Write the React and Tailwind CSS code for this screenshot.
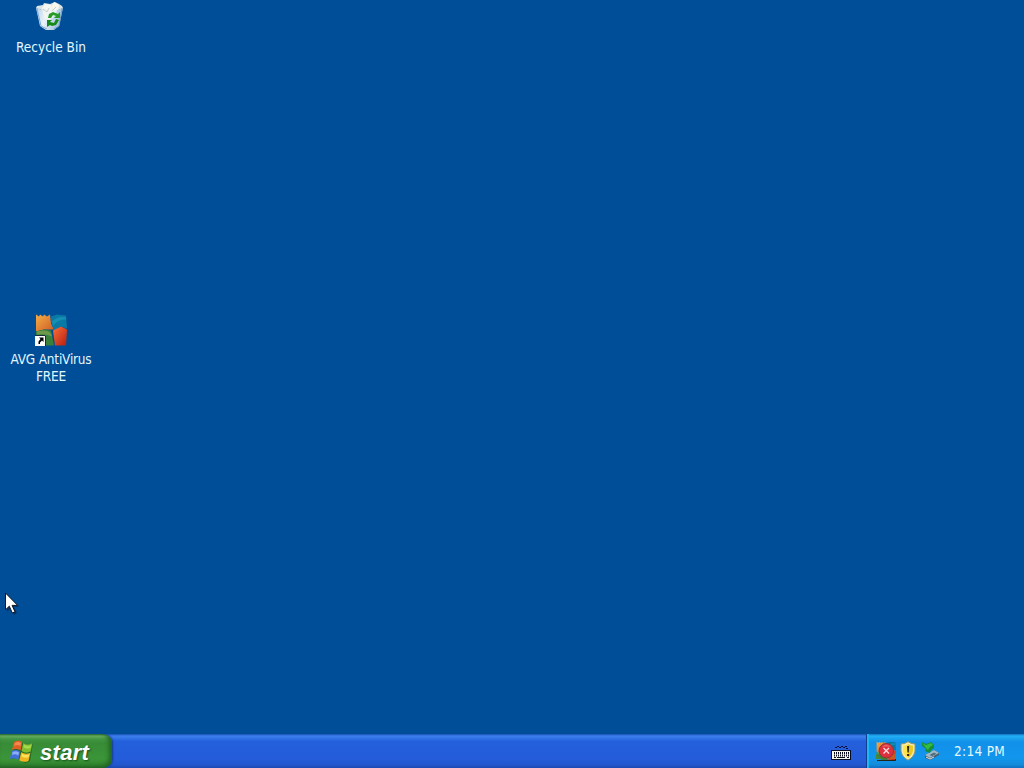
import React from "react";

function RecycleBin() {
  return (
    <svg className="block h-8 w-8" viewBox="0 0 32 32">
      <defs>
        <linearGradient id="bin" x1="0" x2="1" y1="0" y2="0.3">
          <stop offset="0" stopColor="#b9d3ea" />
          <stop offset="0.45" stopColor="#e9f3f8" />
          <stop offset="1" stopColor="#9dbddb" />
        </linearGradient>
      </defs>
      <path d="M2 8 L3 6 L9 5 L10 3 L16 4 L21 2 L25 4 L28 6 L29 8 L16 13 Z" fill="#dce4e6" />
      <path d="M9 8 L11 4 L17 5 L15 11 Z" fill="#fffdf0" />
      <path d="M16 9 L20 2 L25 5 L24 12 Z" fill="#faf8ea" />
      <path d="M2 8 L11 11 L20 11 L29 8 L25 26 L20 30 L12 30 L6 26 Z" fill="url(#bin)" />
      <path d="M8 8 L11 4 L17 6 L23 7 L22 15 L15 20 L10 18 Z" fill="#f4f6f0" opacity=".85" />
      <path d="M3 9 L7 26 L13 29" stroke="#82a9d1" fill="none" />
      <path d="M28 9 L25 26 L20 29" stroke="#779fc7" fill="none" />
      <path d="M9 9 L13 12 L15 8 M18 11 L22 7" stroke="#c6d0d1" fill="none" />
      <path d="M15 14 L19 12 L24 14 L26 12 V18 H20 L22 16 L19 15 L17 18 H14 Z" fill="#269b26" />
      <path d="M13 20 H18 L16 22 L20 23 L22 19 L25 20 L22 25 L18 26 L16 25 L13 27 Z" fill="#168a18" />
    </svg>
  );
}

function AvgMark({ className }) {
  return (
    <svg className={className} viewBox="0 0 32 32">
      <defs>
        <linearGradient id="orange" x2="1" y2="1">
          <stop stopColor="#f5ad45" />
          <stop offset="1" stopColor="#cc5b25" />
        </linearGradient>
        <linearGradient id="red" x2="1" y2="1">
          <stop stopColor="#fb7138" />
          <stop offset="1" stopColor="#b91d10" />
        </linearGradient>
      </defs>
      <path d="M1 1 L4 3 L5 1 L8 3 L9 1 L12 3 L15 1 L16 10 L19 16 L9 16 L1 18 Z" fill="url(#orange)" />
      <path d="M16 3 L22 1 L31 2 L32 15 L26 13 L19 17 L16 9 Z" fill="#087aa5" />
      <path d="M17 8 Q23 2 31 4 L31 6 Q24 5 18 12 Z" fill="#168fb5" />
      <path d="M1 18 L9 16 L16 17 L19 32 L10 32 L1 22 Z" fill="#39813a" />
      <path d="M2 18 Q12 15 16 20 L17 23 Q10 20 2 21 Z" fill="#6d994b" />
      <path d="M18 17 L26 13 L32 16 L31 32 L20 32 Z" fill="url(#red)" />
    </svg>
  );
}

function AvgIcon() {
  return (
    <div className="relative h-[33px] w-[32px]">
      <AvgMark className="block h-[33px] w-[32px]" />
      <svg className="absolute bottom-0 left-0 h-[11px] w-[11px]" viewBox="0 0 11 11">
        <path d="M0 0H11V11H0Z" fill="#fff" />
        <path d="M0 .5H10.5V11" fill="none" stroke="#182c3f" />
        <path d="M4 2.5 H8.5 V7 L7 5.5 L5 7.5 V9 H3.5 V6.5 L5.5 4 Z" fill="#000" />
      </svg>
    </div>
  );
}

function WindowsFlag() {
  return (
    <svg className="block h-[26px] w-[26px] shrink-0" viewBox="0 0 26 26">
      <path d="M6 5 Q10 2 14 5 Q19 8 24 5 L21 23 Q16 27 11 22 Q6 19 2 21 Z" fill="#1e5a24" opacity=".75" />
      <path d="M5 4 Q9 1 13.3 4 L11.5 12.5 Q7 10 3 12 Z" fill="#df6023" />
      <path d="M6 5 Q9 3 12 5 L11.3 8 Q8 6 5 8 Z" fill="#f58a4e" />
      <path d="M14.2 5 Q18.5 8 23.5 5 L21.7 13.5 Q17 16 12.5 13 Z" fill="#80bb30" />
      <path d="M15 6.5 Q19 9 22.3 6.8 L21.6 10 Q18 11.5 14.4 9.5 Z" fill="#a7d948" />
      <path d="M2.7 13 Q7 11 11.2 13.5 L9.3 22 Q5 19 .8 21 Z" fill="#426fda" />
      <path d="M3.5 14 Q7 12.5 10 14.5 L9.3 17.5 Q6 15.5 3 17 Z" fill="#8baef8" />
      <path d="M12.2 14.3 Q17 17 21.4 14.7 L19.5 23 Q14.5 25 10.3 22.3 Z" fill="#efb61f" />
      <path d="M13 15.8 Q17 18 20.3 16.3 L19.6 19.3 Q16 20.5 12.4 18.6 Z" fill="#ffe259" />
    </svg>
  );
}

function Cursor() {
  return (
    <svg className="absolute left-[4px] top-[592px] h-[25px] w-[18px]" viewBox="0 0 18 25">
      <path d="M3 3 V20 L7 16 L10 23 L13 21 L10 15 H15 Z" fill="#002347" opacity=".55" />
      <path d="M1.5 1 V17.8 L5.3 14.2 L8.3 21 L11 19.8 L8.1 13.4 H13.7 Z" fill="#fff" stroke="#09121f" strokeWidth="1" />
    </svg>
  );
}

function Keyboard() {
  return (
    <svg className="block h-[18px] w-[20px]" viewBox="0 0 20 18">
      <path d="M4 4.5H6 M6 3.5H8 M8 4.5H10 M10 3.5H12 M12 4.5H14 M14 3.5H16 M15 5.5H17" stroke="#07123b" />
      <rect x="0" y="7" width="20" height="10" fill="#050b20" />
      <rect x="1" y="8" width="18" height="8" fill="#f5f5ed" />
      <path d="M3 10H18 M3 12.5H18" stroke="#080c1c" strokeWidth="1.8" strokeDasharray="1 1" />
      <path d="M3 14.5H5 M6 14.5H14 M16 14.5H18" stroke="#080c1c" />
    </svg>
  );
}

function TrayAvg() {
  return (
    <div className="relative h-[20px] w-[20px]">
      <AvgMark className="block h-[20px] w-[20px]" />
      <svg className="absolute inset-0 h-[20px] w-[20px]" viewBox="0 0 20 20">
        <path d="M1 19.5H19.5V15" fill="none" stroke="#222719" />
        <path d="M0 18V13L6 18Z" fill="#46873a" />
        <path d="M13 18L20 12V18Z" fill="#c65c22" />
        <circle cx="10.3" cy="9.7" r="7.2" fill="#dc303f" stroke="#94342e" />
        <path d="M6 6Q10 1 15 6Q10 5 6 6" fill="#eb6065" />
        <path d="M7.5 7 L13 12.5 M13 7 L7.5 12.5" stroke="#ffd9d9" strokeWidth="1.4" />
      </svg>
    </div>
  );
}

function Shield() {
  return (
    <svg className="block h-[20px] w-[16px]" viewBox="0 0 16 20">
      <path d="M8 .7 Q11 3 15 3 V10 Q14 16 8 19.2 Q2 16 1 10 V3 Q5 3 8 .7Z" fill="#f6eab0" stroke="#8d986b" />
      <path d="M8 3 Q10 4.5 13 4.7 V10 Q12 14.5 8 17Z" fill="#edc820" />
      <path d="M8 3 Q6 4.5 3 4.7 V10 Q4 14.5 8 17Z" fill="#ffe34b" />
      <path d="M7 5H9.2L8.8 11.5H7.4Z M7 13H9.2V15H7Z" fill="#322d14" />
    </svg>
  );
}

function RemoveDevice() {
  return (
    <svg className="block h-[20px] w-[18px]" viewBox="0 0 18 20">
      <path d="M3 14 L12 9 L17 12 V14 L8 19 L3 17Z" fill="#465e70" />
      <path d="M3 14 L12 9 L17 12 L8 17Z" fill="#9eb9c7" />
      <path d="M7.5 14 L12 11.5 L14.5 12.7 L10 15.3Z" fill="#526d7b" />
      <path d="M4 16 L8 18 L12 16" stroke="#dae1d8" fill="none" />
      <path d="M0 1 L4 3 L9 1 L12 4 L12 7 L9 9 L8 12 L3 10 L4 8 L0 5Z" fill="#178d36" />
      <path d="M0 2 L4 4 L9 2 L11 4 L8 6 L6 9 L4 7Z" fill="#35ba42" />
    </svg>
  );
}

export default function App() {
  return (
    <div className="relative flex h-screen w-full cursor-default select-none flex-col overflow-hidden bg-[#004e98] font-['DejaVu_Sans_Condensed','DejaVu_Sans',sans-serif] text-[#e2f8ff]">
      <main className="flex min-h-0 flex-1 flex-col items-start">
        <div className="flex h-[313px] w-[102px] flex-col items-center">
          <div className="pr-[2px]"><RecycleBin /></div>
          <span className="mt-[7px] whitespace-nowrap text-[13.5px] leading-[17px]">Recycle Bin</span>
        </div>
        <div className="flex w-[102px] flex-col items-center">
          <AvgIcon />
          <span className="mt-[5px] whitespace-nowrap text-center text-[13.5px] leading-[17px] tracking-[-0.2px]">
            AVG AntiVirus<br />FREE
          </span>
        </div>
      </main>
      <Cursor />
      <footer className="flex h-[34px] shrink-0 bg-[linear-gradient(to_bottom,#174fb4_0px,#3b80ed_2px,#3475e8_4px,#2460dc_7px,#245cda_25px,#2156cc_31px,#1c48b0_34px)]">
        <button className="flex h-full w-[112px] items-center rounded-r-[9px] bg-[linear-gradient(to_bottom,#246b34_0px,#6bb062_2px,#429641_5px,#388b37_9px,#3b9538_25px,#31842e_31px,#256a27_34px)] pl-[9px] shadow-[inset_-3px_-1px_4px_#216424,1px_0_2px_#173f8c]">
          <WindowsFlag />
          <span className="ml-[5px] pt-[3px] font-['Liberation_Sans',Arial,sans-serif] text-[22px] font-bold italic leading-none tracking-[0.3px] text-white [text-shadow:1px_1px_2px_#174d1d]">start</span>
        </button>
        <div className="flex flex-1 items-center justify-end pr-[15px] pt-[2px]"><Keyboard /></div>
        <div className="flex h-full w-[158px] items-center border-l border-[#103e91] bg-[linear-gradient(to_bottom,#1269bb_0px,#20b2f5_2px,#1ca4ef_4px,#1290e9_8px,#1196ed_24px,#138bda_31px,#0e68bc_34px)] pl-[9px] shadow-[inset_2px_0_1px_#20b8f4]">
          <div className="flex items-center gap-[4px]"><TrayAvg /><Shield /><div className="ml-[2px]"><RemoveDevice /></div></div>
          <span className="ml-[14px] whitespace-nowrap text-[13.5px] leading-[17px] tracking-[0.3px]">2:14 PM</span>
        </div>
      </footer>
    </div>
  );
}
